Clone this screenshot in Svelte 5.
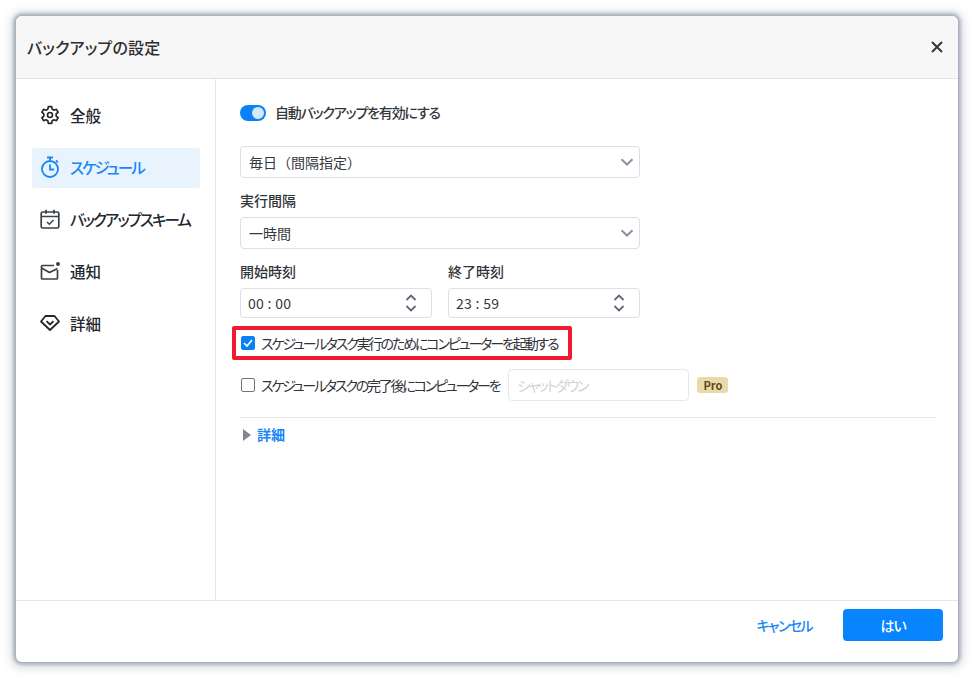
<script>
  const navItems = [
    { id: "general", label: "全般" },
    { id: "schedule", label: "スケジュール", kana: true },
    { id: "scheme", label: "バックアップスキーム", kana: true },
    { id: "notify", label: "通知" },
    { id: "detail", label: "詳細" }
  ];
  let active = $state("schedule");
  let autoBackup = $state(true);
  let wake = $state(true);
  let shutdown = $state(false);
</script>

{#snippet chevron()}
  <svg class="chev" width="14" height="8" viewBox="0 0 14 8"><path d="M1.5 1.2 7 6.5l5.5-5.3" fill="none" stroke="#8b93a0" stroke-width="2"/></svg>
{/snippet}

{#snippet stepper()}
  <svg class="stepper" width="12" height="20" viewBox="0 0 12 20">
    <path d="M1.5 7 6 2.5 10.5 7M1.5 13 6 17.5 10.5 13" fill="none" stroke="#5f6773" stroke-width="1.8"/>
  </svg>
{/snippet}

<div class="page">
  <div class="dialog">
    <header class="head">
      <h1>バックアップの設定</h1>
      <button type="button" class="close" aria-label="close">
        <svg width="12" height="12" viewBox="0 0 12 12"><path d="M1 1l10 10M11 1 1 11" stroke="#33383f" stroke-width="2" fill="none"/></svg>
      </button>
    </header>

    <div class="body">
      <nav class="side">
        {#each navItems as item}
          <button type="button" class="nav-item" class:active={active === item.id} onclick={() => (active = item.id)}>
            <span class="nav-icon">
              {#if item.id === "general"}
                <svg width="20" height="20" viewBox="0 0 24 24" fill="none" stroke="currentColor" stroke-width="2" stroke-linejoin="round">
                  <circle cx="12" cy="12" r="3"/>
                  <path d="M10 2h4l.6 3 2.2 1.2 2.9-1 2 3.5-2.3 2v2.6l2.3 2-2 3.5-2.9-1-2.2 1.2-.6 3h-4l-.6-3-2.2-1.2-2.9 1-2-3.5 2.3-2v-2.6l-2.3-2 2-3.5 2.9 1L9.4 5z"/>
                </svg>
              {:else if item.id === "schedule"}
                <svg width="20" height="22" viewBox="0 0 20 22" fill="none" stroke="currentColor" stroke-width="1.8">
                  <path d="M7 1.5h6M10 1.5v3M16 4.5l1.8 1.8"/>
                  <circle cx="10" cy="13" r="8"/>
                  <path d="M10 8.5V13.5h4"/>
                </svg>
              {:else if item.id === "scheme"}
                <svg width="20" height="20" viewBox="0 0 20 20" fill="none" stroke="#3a4048" stroke-width="1.7">
                  <rect x="1.2" y="3" width="17.6" height="16" rx="1.5"/>
                  <path d="M1.2 7.5h17.6M6 .8v4M14 .8v4"/>
                  <path d="M7 13l2.3 2.2L13.5 11" stroke-width="1.5"/>
                </svg>
              {:else if item.id === "notify"}
                <svg width="20" height="20" viewBox="0 0 20 20" fill="none" stroke="#3a4048" stroke-width="1.7">
                  <path d="M14 4.5H2.5a1 1 0 0 0-1 1V17a1 1 0 0 0 1 1h14a1 1 0 0 0 1-1V9"/>
                  <path d="M1.5 7 9.5 11.5l8-4"/>
                  <circle cx="18" cy="3" r="2" fill="#3a4048" stroke="none"/>
                </svg>
              {:else}
                <svg width="20" height="18" viewBox="0 0 20 18" fill="none" stroke="#23272d" stroke-width="1.8" stroke-linejoin="round">
                  <path d="M5.5 2h9L19 7.5 10 16 1 7.5z"/>
                  <path d="M6.5 7.2 10 10.5l3.5-3.3"/>
                </svg>
              {/if}
            </span>
            <span class:kana={item.kana}>{item.label}</span>
          </button>
        {/each}
      </nav>

      <main class="content">
        <label class="toggle-row">
          <button type="button" class="toggle" class:on={autoBackup} aria-label="toggle" onclick={() => (autoBackup = !autoBackup)}><span class="knob"></span></button>
          <span class="toggle-text">自動バックアップを有効にする</span>
        </label>

        <div class="select first"><span>毎日（間隔指定）</span>{@render chevron()}</div>

        <div class="label interval">実行間隔</div>
        <div class="select"><span>一時間</span>{@render chevron()}</div>

        <div class="times">
          <div class="time-col">
            <div class="label">開始時刻</div>
            <div class="time-input"><span>00 : 00</span>{@render stepper()}</div>
          </div>
          <div class="time-col">
            <div class="label">終了時刻</div>
            <div class="time-input"><span>23 : 59</span>{@render stepper()}</div>
          </div>
        </div>

        <div class="check-row wake">
          <button type="button" class="check" class:checked={wake} aria-label="wake" onclick={() => (wake = !wake)}>
            {#if wake}
              <svg width="10" height="8" viewBox="0 0 10 8"><path d="M1 4l3 3 5-6" fill="none" stroke="#fff" stroke-width="1.7"/></svg>
            {/if}
          </button>
          <span class="tight">スケジュールタスク実行のためにコンピューターを起動する</span>
          <span class="highlight"></span>
        </div>

        <div class="check-row after">
          <button type="button" class="check" class:checked={shutdown} aria-label="shutdown" onclick={() => (shutdown = !shutdown)}></button>
          <span class="tighter">スケジュールタスクの完了後にコンピューターを</span>
          <div class="disabled-input">シャットダウン</div>
          <span class="pro">Pro</span>
        </div>

        <hr />

        <div class="more">
          <svg width="8" height="12" viewBox="0 0 8 12"><path d="M0 0l8 6-8 6z" fill="#7f8794"/></svg>
          <span>詳細</span>
        </div>
      </main>
    </div>

    <footer class="foot">
      <button type="button" class="cancel">キャンセル</button>
      <button type="button" class="ok">はい</button>
    </footer>
  </div>
</div>

<style>
  :global(body) {
    margin: 0;
    background: #fff;
    font-family: "Noto Sans CJK JP", "Noto Sans", sans-serif;
    font-feature-settings: "palt";
  }

  button {
    font-family: inherit;
    font-feature-settings: inherit;
    border: none;
    background: none;
    padding: 0;
    cursor: pointer;
  }

  .page {
    width: 974px;
    height: 678px;
    box-sizing: border-box;
    padding: 15px;
    overflow: hidden;
  }

  .dialog {
    width: 944px;
    height: 648px;
    box-sizing: border-box;
    display: flex;
    flex-direction: column;
    background: #fff;
    border-radius: 7px;
    border: 1px solid #aab1bf;
    box-shadow: 0 0 3px 2px rgba(130, 140, 160, 0.5), 0 1px 10px 4px rgba(130, 140, 160, 0.3);
  }

  .head {
    height: 63px;
    flex: none;
    box-sizing: border-box;
    display: flex;
    align-items: center;
    justify-content: space-between;
    padding: 0 15px 0 11px;
    background: #f7f7f7;
    border-bottom: 1px solid #e3e4e6;
    border-radius: 7px 7px 0 0;
  }

  h1 {
    margin: 0;
    font-size: 16px;
    font-weight: 500;
    letter-spacing: 0.2px;
    color: #2a2e34;
  }

  .close {
    width: 12px;
    height: 12px;
    display: flex;
  }

  .body {
    flex: 1;
    display: flex;
    min-height: 0;
  }

  .side {
    width: 200px;
    flex: none;
    box-sizing: border-box;
    border-right: 1px solid #e6e7ea;
    padding: 17px 15px 0 16px;
    display: flex;
    flex-direction: column;
    gap: 12px;
  }

  .nav-item {
    height: 40px;
    display: flex;
    align-items: center;
    gap: 10px;
    padding: 0 0 2px 8px;
    border-radius: 3px;
    font-size: 15.5px;
    font-weight: 500;
    color: #23272d;
    white-space: nowrap;
    text-align: left;
  }

  .kana {
    letter-spacing: -1.95px;
  }

  .nav-icon {
    width: 20px;
    height: 22px;
    display: flex;
    align-items: center;
    justify-content: center;
  }

  .nav-item.active {
    background: #e8f3fe;
    color: #1787f5;
  }

  .content {
    flex: 1;
    min-width: 0;
    box-sizing: border-box;
    padding: 24px 22px 0 24px;
    font-size: 14px;
    color: #33383f;
  }

  .toggle-row {
    display: flex;
    align-items: center;
    gap: 9px;
    height: 20px;
    font-size: 14px;
    font-weight: 500;
  }

  .toggle-text {
    letter-spacing: -1.2px;
    margin-top: -2px;
  }

  .toggle {
    width: 26px;
    height: 16px;
    border-radius: 8px;
    background: #bcc2cc;
    position: relative;
  }

  .toggle.on {
    background: #0a82f5;
  }

  .knob {
    position: absolute;
    top: 2px;
    left: 2px;
    width: 12px;
    height: 12px;
    border-radius: 50%;
    background: #d6e8fb;
  }

  .toggle.on .knob {
    left: 12px;
  }

  .select {
    width: 400px;
    height: 32px;
    box-sizing: border-box;
    border: 1px solid #dcdfe6;
    border-radius: 4px;
    display: flex;
    align-items: center;
    justify-content: space-between;
    padding: 0 5px 0 8px;
    font-feature-settings: normal;
  }

  .select.first {
    margin-top: 23px;
  }

  .label {
    font-size: 14px;
    font-weight: 500;
    line-height: 19px;
    color: #2f343a;
  }

  .interval {
    margin-top: 13px;
    margin-bottom: 7px;
  }

  .times {
    display: flex;
    gap: 16px;
    width: 400px;
    margin-top: 13px;
  }

  .time-col {
    flex: 1;
    display: flex;
    flex-direction: column;
    gap: 7px;
  }

  .time-input {
    height: 30px;
    box-sizing: border-box;
    border: 1px solid #dcdfe6;
    border-radius: 4px;
    display: flex;
    align-items: center;
    justify-content: space-between;
    padding: 0 14px 0 7px;
    font-size: 14px;
    letter-spacing: 0.3px;
  }

  .check-row {
    display: flex;
    align-items: center;
    gap: 6px;
    font-size: 14px;
    color: #2f343a;
    white-space: nowrap;
  }

  .tight {
    letter-spacing: -2.1px;
  }

  .tighter {
    letter-spacing: -2.2px;
  }

  .check {
    width: 14px;
    height: 14px;
    flex: none;
    box-sizing: border-box;
    border: 1.5px solid #6d7480;
    border-radius: 2px;
    background: #fff;
    display: flex;
    align-items: center;
    justify-content: center;
  }

  .check.checked {
    background: #0a82f5;
    border-color: #0a82f5;
  }

  .wake {
    position: relative;
    height: 20px;
    margin-top: 15px;
    margin-left: 1px;
  }

  .highlight {
    position: absolute;
    left: -9px;
    top: -7px;
    width: 340px;
    height: 34px;
    box-sizing: border-box;
    border: 4px solid #ed1c2e;
    border-radius: 2px;
  }

  .after {
    margin-top: 16px;
    margin-left: 1px;
    height: 32px;
  }

  .disabled-input {
    width: 181px;
    height: 32px;
    box-sizing: border-box;
    margin-left: 3px;
    border: 1px solid #e6e8ed;
    border-radius: 4px;
    display: flex;
    align-items: center;
    padding-left: 8px;
    color: #cfd3da;
    font-size: 14px;
    letter-spacing: -2px;
  }

  .pro {
    margin-left: 2px;
    background: #ecd9a9;
    color: #5b4a21;
    border-radius: 3px;
    font-size: 11px;
    font-weight: 700;
    padding: 0 6px;
    line-height: 16px;
  }

  hr {
    border: none;
    border-top: 1px solid #e8e9ec;
    margin: 16px 0 0;
  }

  .more {
    display: flex;
    align-items: center;
    gap: 6px;
    margin: 7px 0 0 3px;
    color: #1787f5;
    font-size: 14px;
    font-weight: 700;
    line-height: 19px;
  }

  .foot {
    height: 62px;
    flex: none;
    box-sizing: border-box;
    border-top: 1px solid #e6e7ea;
    display: flex;
    align-items: flex-start;
    justify-content: flex-end;
    padding: 8px 15px 0 0;
    gap: 31px;
  }

  .cancel {
    height: 32px;
    color: #1787f5;
    font-size: 14px;
    font-weight: 500;
    letter-spacing: -1.6px;
  }

  .ok {
    width: 100px;
    height: 32px;
    background: #0885fe;
    color: #fff;
    border-radius: 4px;
    font-size: 14px;
    font-weight: 500;
    letter-spacing: -1px;
  }
</style>
